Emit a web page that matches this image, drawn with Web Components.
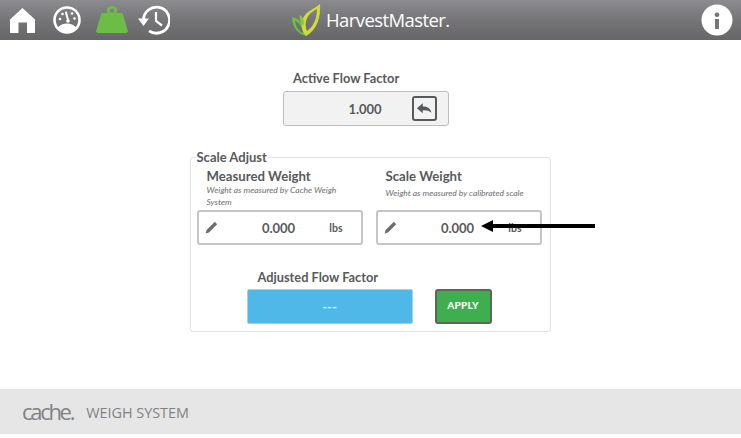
<!DOCTYPE html>
<html lang="en">
<head>
<meta charset="utf-8">
<title>Scale Adjust</title>
<style>
html, body { margin: 0; padding: 0; background: #fff; }
body { width: 741px; height: 438px; overflow: hidden; font-family: Lato, "Open Sans", sans-serif; color: #58595b; }
</style>
</head>
<body>
<app-header></app-header>
<calibration-page></calibration-page>
<app-footer></app-footer>

<script>
/* Top bar: nav icons, logo, info button */
customElements.define('app-header', class extends HTMLElement {
    constructor() {
        super();
        this.attachShadow({ mode: 'open' }).innerHTML = `
        <style>
        :host { display: flex; align-items: center; height: 40px; box-sizing: border-box;
            background: linear-gradient(#8c8c90 0%, #77777a 45%, #666668 100%); position: relative; }
        nav { display: flex; align-items: center; gap: 15px; padding-left: 9px; width: 270px; box-sizing: border-box; height: 100%; }
        svg { display: block; flex: none; }
        .logo { display: flex; align-items: center; gap: 5px; margin-left: 21px; flex: 1; }
        .logo span { font: 400 18.500px "Open Sans", sans-serif; letter-spacing: -.58px; color: #fff; line-height: 40px; }
        .info { margin-right: 8px; }
        </style>
        <nav>
            <svg width="27" height="27" viewBox="0 0 27 27"><path fill="#fff" d="M13.500 1 26 12.500V26H18V15.500H9.500V26H1V12.500z"/></svg>
            <svg width="28" height="28" viewBox="0 0 28 28" style="margin-left:2px"><circle cx="14" cy="14" r="12.500" fill="none" stroke="#fff" stroke-width="2.600"/><path fill="#fff" d="M4 22c3-3.300 6.500-4.500 10-4.500S21 18.700 24 22c-2.500 3-6 4.800-10 4.800S6.500 25 4 22z"/><path fill="none" stroke="#fff" stroke-width="2" stroke-linecap="round" d="M13 6.500 15 14"/><circle cx="15" cy="15" r="1.800" fill="#fff"/><g fill="#fff"><circle cx="7" cy="13" r="1.300"/><circle cx="9.500" cy="8" r="1.300"/><circle cx="19" cy="7.500" r="1.300"/><circle cx="21.500" cy="12.500" r="1.300"/></g></svg>
            <svg width="32" height="27" viewBox="0 0 32 27" style="margin-left:0;margin-top:-1px"><path fill="#6cbd45" d="M16 0a4.500 4.500 0 0 1 4.300 7h5c.8 0 1.300.4 1.500 1.100L31.700 24.500c.4 1.500-.4 2.500-2 2.500H2.300c-1.600 0-2.400-1-2-2.500L5.200 8.100C5.400 7.400 5.900 7 6.700 7h5A4.500 4.500 0 0 1 16 0zm0 2.400a2.200 2.200 0 0 0 0 4.400 2.200 2.200 0 0 0 0-4.400z"/></svg>
            <svg width="32" height="30" viewBox="0 0 32 30" style="margin-left:-5px"><path fill="none" stroke="#fff" stroke-width="2.800" d="M5.500 15A13 13 0 1 1 11 25.800"/><path fill="#fff" d="M0 13.500h11L5.500 21z"/><path fill="none" stroke="#fff" stroke-width="2.200" d="M18 7v9l6 4.500"/></svg>
        </nav>
        <div class="logo">
            <svg width="30" height="34" viewBox="0 0 30 34">
                <path fill="#6cbd45" fill-rule="evenodd" d="M1 14c6 1 10 5 12 10 1 4 2 7 3 9C8 32 1 25 1 14zm3 4c1 6 4 10 8 12-1-6-3-10-8-12z"/>
                <path fill="#cfdb3b" fill-rule="evenodd" d="M29 1c1 13-3 26-14 32C8 25 10 14 17 9c4-3 9-5 12-8zm-3 5c-3 2-6 3-8 6-4 5-4 11-2 16 7-5 10-13 10-22z"/>
                <path fill="#8cc63f" d="M9 12c3 2 4 5 4 8l-1 3c-2-3-4-7-3-11z"/>
            </svg>
            <span>HarvestMaster.</span>
        </div>
        <svg class="info" width="32" height="32" viewBox="0 0 32 32"><circle cx="16" cy="16" r="15.500" fill="#fff"/><rect x="13.800" y="8.500" width="4.400" height="4.600" rx="1.800" fill="#77777a"/><rect x="14" y="15" width="4" height="10" fill="#77777a"/></svg>`;
    }
});

/* Bordered box with a value, used by the readout and the weight inputs */
customElements.define('value-box', class extends HTMLElement {
    constructor() {
        super();
        this.attachShadow({ mode: 'open' }).innerHTML = `
        <style>
        :host { display: grid; grid-template-columns: 1fr auto 1fr; align-items: center; width: 166px; height: 35px;
            box-sizing: border-box; border: 2px solid #c4c5c6; border-radius: 3px; background: #fff; padding-right: 2px;
            font: 700 13px Lato, sans-serif; color: #58595b; }
        :host([shaded]) { background: #f1f2f1; border-width: 1.500px; border-color: #bcbdbd; }
        .lead { display: flex; padding-left: 6px; }
        .trail { display: flex; justify-content: flex-end; padding-right: 16px; font-size: 10.500px; }
        </style>
        <div class="lead"><slot name="lead"></slot></div>
        <slot></slot>
        <div class="trail"><slot name="trail"></slot></div>`;
    }
});

customElements.define('pencil-icon', class extends HTMLElement {
    constructor() {
        super();
        this.attachShadow({ mode: 'open' }).innerHTML = `
        <style>:host { display: block; width: 13px; height: 13px; } svg { display: block; }</style>
        <svg width="13" height="13" viewBox="0 0 13 13"><path fill="#6d6e70" d="M9.800.8 12.200 3.200 4 11.400.6 12.400 1.600 9z"/></svg>`;
    }
});

/* Title, hint text and input for one weight */
customElements.define('weight-field', class extends HTMLElement {
    constructor() {
        super();
        this.attachShadow({ mode: 'open' }).innerHTML = `
        <style>
        :host { display: flex; flex-direction: column; width: 166px; }
        h3 { margin: 0; padding-left: 10px; font: 700 13.200px/16px Lato, sans-serif; color: #58595b; }
        p { margin: 0; padding: 0 8px 0 10px; height: 24px; box-sizing: border-box; display: flex; align-items: center;
            font: italic 400 8.500px/12px Lato, sans-serif; color: #6d6e70; }
        :host([short]) p { padding-bottom: 6px; }
        value-box { margin-top: 2px; }
        </style>
        <h3></h3>
        <p></p>
        <value-box>
            <pencil-icon slot="lead"></pencil-icon>
            <span class="val"></span>
            <span slot="trail">lbs</span>
        </value-box>`;
    }
    connectedCallback() {
        this.shadowRoot.querySelector('h3').textContent = this.getAttribute('label');
        this.shadowRoot.querySelector('p').textContent = this.getAttribute('hint');
        this.shadowRoot.querySelector('.val').textContent = this.getAttribute('value');
    }
});

/* Centre column of the page */
customElements.define('calibration-page', class extends HTMLElement {
    constructor() {
        super();
        this.attachShadow({ mode: 'open' }).innerHTML = `
        <style>
        :host { display: flex; flex-direction: column; align-items: center; height: 349px; box-sizing: border-box;
            padding-top: 30px; position: relative; font-family: Lato, sans-serif; color: #58595b; }
        .label { font: 700 12.800px/16px Lato, sans-serif; }
        .active { display: flex; flex-direction: column; margin-right: 9px; }
        .active .label { padding-left: 10px; }
        .active value-box { margin-top: 5px; }
        .undo { width: 25px; height: 25px; box-sizing: border-box; margin-right: -7px;
            border: 2px solid #58595b; border-radius: 3px; display: flex; align-items: center; justify-content: center; }
        .undo svg { display: block; }
        fieldset { width: 361px; height: 183px; box-sizing: border-box; margin: 23px 0 0 -1px; padding: 0 6px; min-width: 0;
            border: 1.500px solid #dfe3e8; border-radius: 3px; }
        legend { padding: 0 1px; margin-left: -1px; font: 700 13px/16px Lato, sans-serif; }
        .cols { display: flex; gap: 13px; margin-top: 3px; }
        .adjust { display: grid; grid-template-columns: 166px 57px; column-gap: 22px; margin: 24px 0 0 50px; }
        .adjust .label { grid-column: 1; padding-left: 11px; margin: 0 0 4px 0; white-space: nowrap; }
        .result { grid-row: 2; height: 35px; box-sizing: border-box; background: #4fb8e9; border: 1px solid #a9cfe3; border-radius: 2px;
            display: flex; align-items: center; justify-content: center; color: #d8eefa; font: 700 13px Lato, sans-serif; }
        button { grid-row: 2; height: 35px; box-sizing: border-box; background: #3fae4f; border: 2px solid #5d6460; border-radius: 3px;
            color: #fff; font: 900 10px Lato, sans-serif; padding: 0 0 3px; letter-spacing: .2px; }
        .pointer { position: absolute; left: 481px; top: 179px; display: block; }
        </style>
        <div class="active">
            <div class="label">Active Flow Factor</div>
            <value-box shaded>
                <span>1.000</span>
                <div class="undo" slot="trail"><svg width="17" height="13" viewBox="0 0 19 15"><path fill="#58595b" d="M7.500 1.500V5.200C13 5 16.500 7.500 17.500 12.500 15.200 10 12 9.300 7.500 9.500V13L.8 7.200z"/></svg></div>
            </value-box>
        </div>
        <fieldset>
            <legend>Scale Adjust</legend>
            <div class="cols">
                <weight-field label="Measured Weight" hint="Weight as measured by Cache Weigh System" value="0.000"></weight-field>
                <weight-field short label="Scale Weight" hint="Weight as measured by calibrated scale" value="0.000"></weight-field>
            </div>
            <div class="adjust">
                <div class="label">Adjusted Flow Factor</div>
                <div class="result">---</div>
                <button>APPLY</button>
            </div>
        </fieldset>
        <svg class="pointer" width="114" height="14" viewBox="0 0 114 14"><path fill="#000" d="M0 7 12 1V5H114V9H12V13z"/></svg>`;
    }
});

customElements.define('app-footer', class extends HTMLElement {
    constructor() {
        super();
        this.attachShadow({ mode: 'open' }).innerHTML = `
        <style>
        :host { display: flex; align-items: center; height: 45px; padding-left: 22px; background: #e6e6e6; gap: 13px; color: #808285; }
        .brand { font: 400 22px "Open Sans", sans-serif; letter-spacing: -2.300px; color: #808285; line-height: 45px; }
        .sys { font: 400 14.400px "Open Sans", sans-serif; letter-spacing: 0; margin-top: 1px; }
        </style>
        <span class="brand">cache.</span><span class="sys">WEIGH SYSTEM</span>`;
    }
});
</script>
</body>
</html>
